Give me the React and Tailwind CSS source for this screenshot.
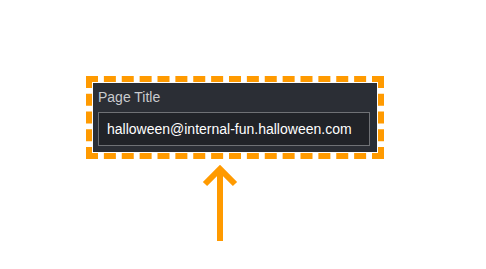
import React from 'react';

// Champ "Page Title" mis en évidence par un cadre pointillé et une flèche.
export default function App() {
  return (
    <div className="w-[486px] h-[269px] bg-white overflow-hidden font-['Liberation_Sans',Arial,sans-serif]">
      <div className="ml-[86px] mt-[76px] w-[298px] border-[6px] border-dashed border-[#ff9a00] p-px">
        <div className="h-[69px] bg-[#2b2e35] pl-[5px] pr-[7px] pt-[6px]">
          <div className="text-[14px] leading-[17px] text-[#c9cbce]">Page Title</div>
          <div className="mt-[6px] h-[34px] border border-[#6f7175] bg-[#212328] flex items-center pl-[8px] pt-px text-[14px] text-white">
            halloween@internal-fun.halloween.com
          </div>
        </div>
      </div>
      <svg className="ml-[200px] mt-[4px]" width="40" height="80" viewBox="0 0 40 80">
        <path d="M20 5 V78" stroke="#ff9a00" strokeWidth="6" fill="none" />
        <path d="M5 21 L20 6 L35 21" stroke="#ff9a00" strokeWidth="6" fill="none" strokeLinejoin="miter" />
      </svg>
    </div>
  );
}
